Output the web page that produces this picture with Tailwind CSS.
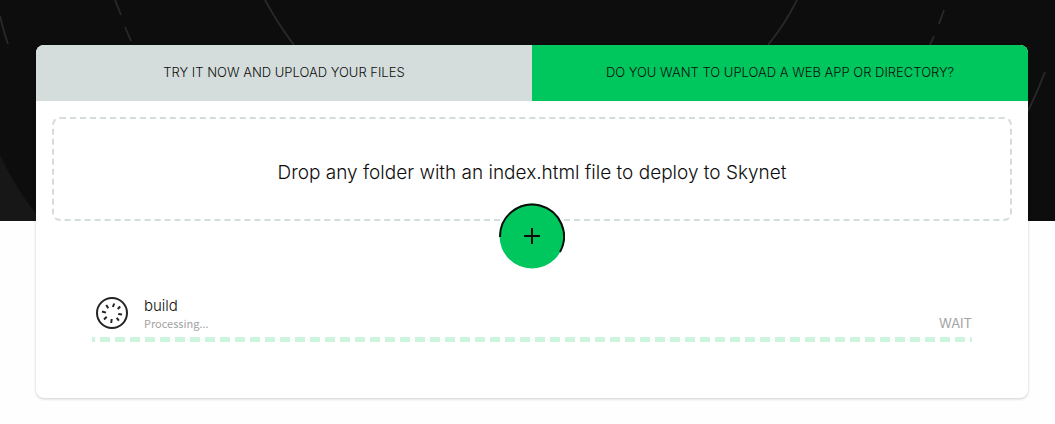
<!DOCTYPE html>
<html lang="en">
<head>
<meta charset="utf-8">
<meta name="viewport" content="width=device-width, initial-scale=1">
<title>Skynet upload</title>
<script src="https://cdn.jsdelivr.net/npm/@tailwindcss/browser@4"></script>
</head>
<body class="relative min-h-screen bg-[#fefefe] font-['Inter',sans-serif] text-[#0d0d0d]">
<svg class="absolute inset-x-0 top-0 h-[221px] w-full bg-[#0d0d0d]" viewBox="0 0 1055 221" preserveAspectRatio="xMidYMin slice" fill="none" stroke="#292929" stroke-width="1.8" aria-hidden="true">
  <path d="M0 155Q15 187 36 214V221H0Z" fill="#171717" stroke="none"/>
  <path d="M0 16Q3 30 8 44M115 0L121 15M125 27L131 41M265 0Q278 24 294 45M797 0Q785 24 768 45M944 10L939 24M934 36L930 45M1045 72Q1037 93 1028 111"/>
</svg>
<main class="relative pt-[45px] pr-[27px] pb-6 pl-9">
  <section class="rounded-lg bg-white pb-14 shadow-[0_1px_3px_rgba(0,0,0,0.2)]">
    <div class="grid grid-cols-2 overflow-hidden rounded-t-lg text-[13px] leading-5">
      <button type="button" class="h-14 bg-[#d4dddb] pb-0.5 text-center font-light">TRY IT NOW AND UPLOAD YOUR FILES</button>
      <button type="button" class="h-14 bg-[#00c65e] pb-0.5 text-center font-light">DO YOU WANT TO UPLOAD A WEB APP OR DIRECTORY?</button>
    </div>
    <div class="px-4 pt-4">
      <div class="rounded-lg border-2 border-dashed border-[#d4dddb] px-4 pt-10 pb-8 text-center">
        <p class="text-[19px] leading-7 font-light">Drop any folder with an index.html file to deploy to Skynet</p>
      </div>
      <button type="button" aria-label="Add folder" class="relative mx-auto -mt-[18px] block size-[66px]">
        <svg viewBox="0 0 66 66" fill="none" stroke="#0d0d0d" stroke-width="2" aria-hidden="true">
          <circle cx="33" cy="33" r="32.5" fill="#00c65e" stroke="none"/>
          <path d="M1 34A32 32 0 1 1 61 49M25 33H41M33 25V41"/>
        </svg>
      </button>
    </div>
    <div class="mt-6 px-14">
      <div class="flex items-center">
        <svg class="mt-0.5 ml-1 size-8 shrink-0" viewBox="0 0 32 32" fill="none" stroke="#242424" stroke-width="2" aria-hidden="true">
          <circle cx="16" cy="16" r="15"/>
          <path d="M18.200 6.500L16.900 10M24.200 9.500L21.700 12M26 17.500L22.200 16.900M22.900 23.700L20.700 20.800M15.200 26L15.700 22M8 22.500L10.700 19.800M6 14.500L10 15.600M10.200 8L12.300 11.300"/>
        </svg>
        <div class="ml-4 grow">
          <div class="pt-1 text-[15px] leading-[18px] font-light">build</div>
          <div class="flex items-center justify-between leading-4 text-[#a3a3a3]">
            <span class="font-['Noto_Sans_CJK_SC',sans-serif] text-[11px] leading-4">Processing...</span>
            <span class="text-[13px]">WAIT</span>
          </div>
        </div>
      </div>
      <div role="progressbar" aria-label="Processing build" class="mt-1.5 h-[5px] bg-[repeating-linear-gradient(90deg,#ccf4df_0_3px,transparent_3px_8px,#ccf4df_8px_15px)]"></div>
    </div>
  </section>
</main>
</body>
</html>
